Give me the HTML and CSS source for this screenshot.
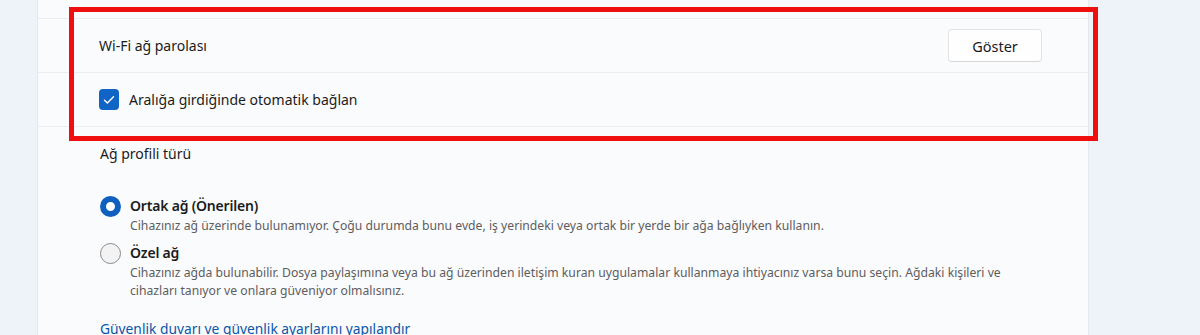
FILE: index.html
```html
<!DOCTYPE html>
<html lang="tr">
<head>
<meta charset="utf-8">
<title>Wi-Fi</title>
<link rel="stylesheet" href="styles.css">
</head>
<body>
<div class="page">
  <div class="card">
    <div class="top-gap"></div>
    <div class="row">
      <span class="row-label">Wi-Fi ağ parolası</span>
      <button class="btn">Göster</button>
    </div>
    <div class="row">
      <label class="check">
        <span class="box">
          <svg width="12" height="10" viewBox="0 0 12 10"><path d="M1.5 5.2 L4.4 8 L10.5 1.8" fill="none" stroke="#fff" stroke-width="1.4" stroke-linecap="round" stroke-linejoin="round"/></svg>
        </span>
        <span class="row-label">Aralığa girdiğinde otomatik bağlan</span>
      </label>
    </div>
    <div class="section">
      <div class="section-title">Ağ profili türü</div>
      <div class="radios">
        <div class="radio-item">
          <span class="radio on"></span>
          <div class="radio-text">
            <div class="radio-title">Ortak ağ (Önerilen)</div>
            <div class="radio-desc">Cihazınız ağ üzerinde bulunamıyor. Çoğu durumda bunu evde, iş yerindeki veya ortak bir yerde bir ağa bağlıyken kullanın.</div>
          </div>
        </div>
        <div class="radio-item">
          <span class="radio"></span>
          <div class="radio-text">
            <div class="radio-title">Özel ağ</div>
            <div class="radio-desc">Cihazınız ağda bulunabilir. Dosya paylaşımına veya bu ağ üzerinden iletişim kuran uygulamalar kullanmaya ihtiyacınız varsa bunu seçin. Ağdaki kişileri ve<br>cihazları tanıyor ve onlara güveniyor olmalısınız.</div>
          </div>
        </div>
      </div>
      <a class="link" href="#">Güvenlik duvarı ve güvenlik ayarlarını yapılandır</a>
    </div>
  </div>
  <div class="highlight"></div>
</div>
</body>
</html>
```

FILE: styles.css
```css
html, body {
  margin: 0;
  padding: 0;
}
body {
  background: #eef2f9;
  font-family: "Noto Sans", "Open Sans", sans-serif;
  color: #1b1b1b;
  width: 1200px;
  height: 335px;
  overflow: hidden;
}
.page {
  position: relative;
  height: 335px;
}
.card {
  margin-left: 37px;
  width: 1050px;
  height: 335px;
  background: #fafbfd;
  border-left: 1px solid #e6e8ec;
  border-right: 1px solid #e6e8ec;
}
.top-gap {
  height: 18px;
}
.row {
  height: 53px;
  border-top: 1px solid #ebedf0;
  display: flex;
  align-items: center;
  justify-content: space-between;
  padding: 0 46px 0 61px;
}
.row + .row {
  border-bottom: 1px solid #ebedf0;
}
.row-label {
  font-size: 14px;
}
.btn {
  width: 94px;
  height: 33px;
  background: #fefefe;
  border: 1px solid #e3e4e6;
  border-bottom-color: #d6d7d9;
  border-radius: 4px;
  font-family: inherit;
  font-size: 14.5px;
  color: #1b1b1b;
  padding: 0;
}
.check {
  display: flex;
  align-items: center;
  gap: 10px;
}
.box {
  width: 20px;
  height: 21px;
  border-radius: 4px;
  background: #1064c6;
  display: flex;
  align-items: center;
  justify-content: center;
}
.section {
  padding: 17px 0 0 62px;
}
.section-title {
  font-size: 14px;
  line-height: 20px;
}
.radios {
  margin-top: 31px;
  display: flex;
  flex-direction: column;
  gap: 7px;
}
.radio-item {
  display: flex;
  align-items: flex-start;
  gap: 9px;
}
.radio {
  width: 21px;
  height: 21px;
  box-sizing: border-box;
  border-radius: 50%;
  border: 1px solid #8a8a8a;
  background: #f3f3f3;
  flex: none;
  margin-top: 1px;
}
.radio.on {
  border: 6px solid #0f5fbf;
  background: #ffffff;
}
.radio-title {
  font-size: 14px;
  font-weight: 600;
  letter-spacing: -0.2px;
  line-height: 22px;
}
.radio-desc {
  font-size: 12.2px;
  color: #5d5d5d;
  line-height: 18px;
}
.link {
  display: inline-block;
  margin-top: 19px;
  font-size: 13.8px;
  color: #0b56a8;
  text-decoration: none;
  line-height: 20px;
}
.highlight {
  position: absolute;
  left: 69px;
  top: 7px;
  width: 1019px;
  height: 124px;
  border: 5px solid #f00f0f;
}
```
